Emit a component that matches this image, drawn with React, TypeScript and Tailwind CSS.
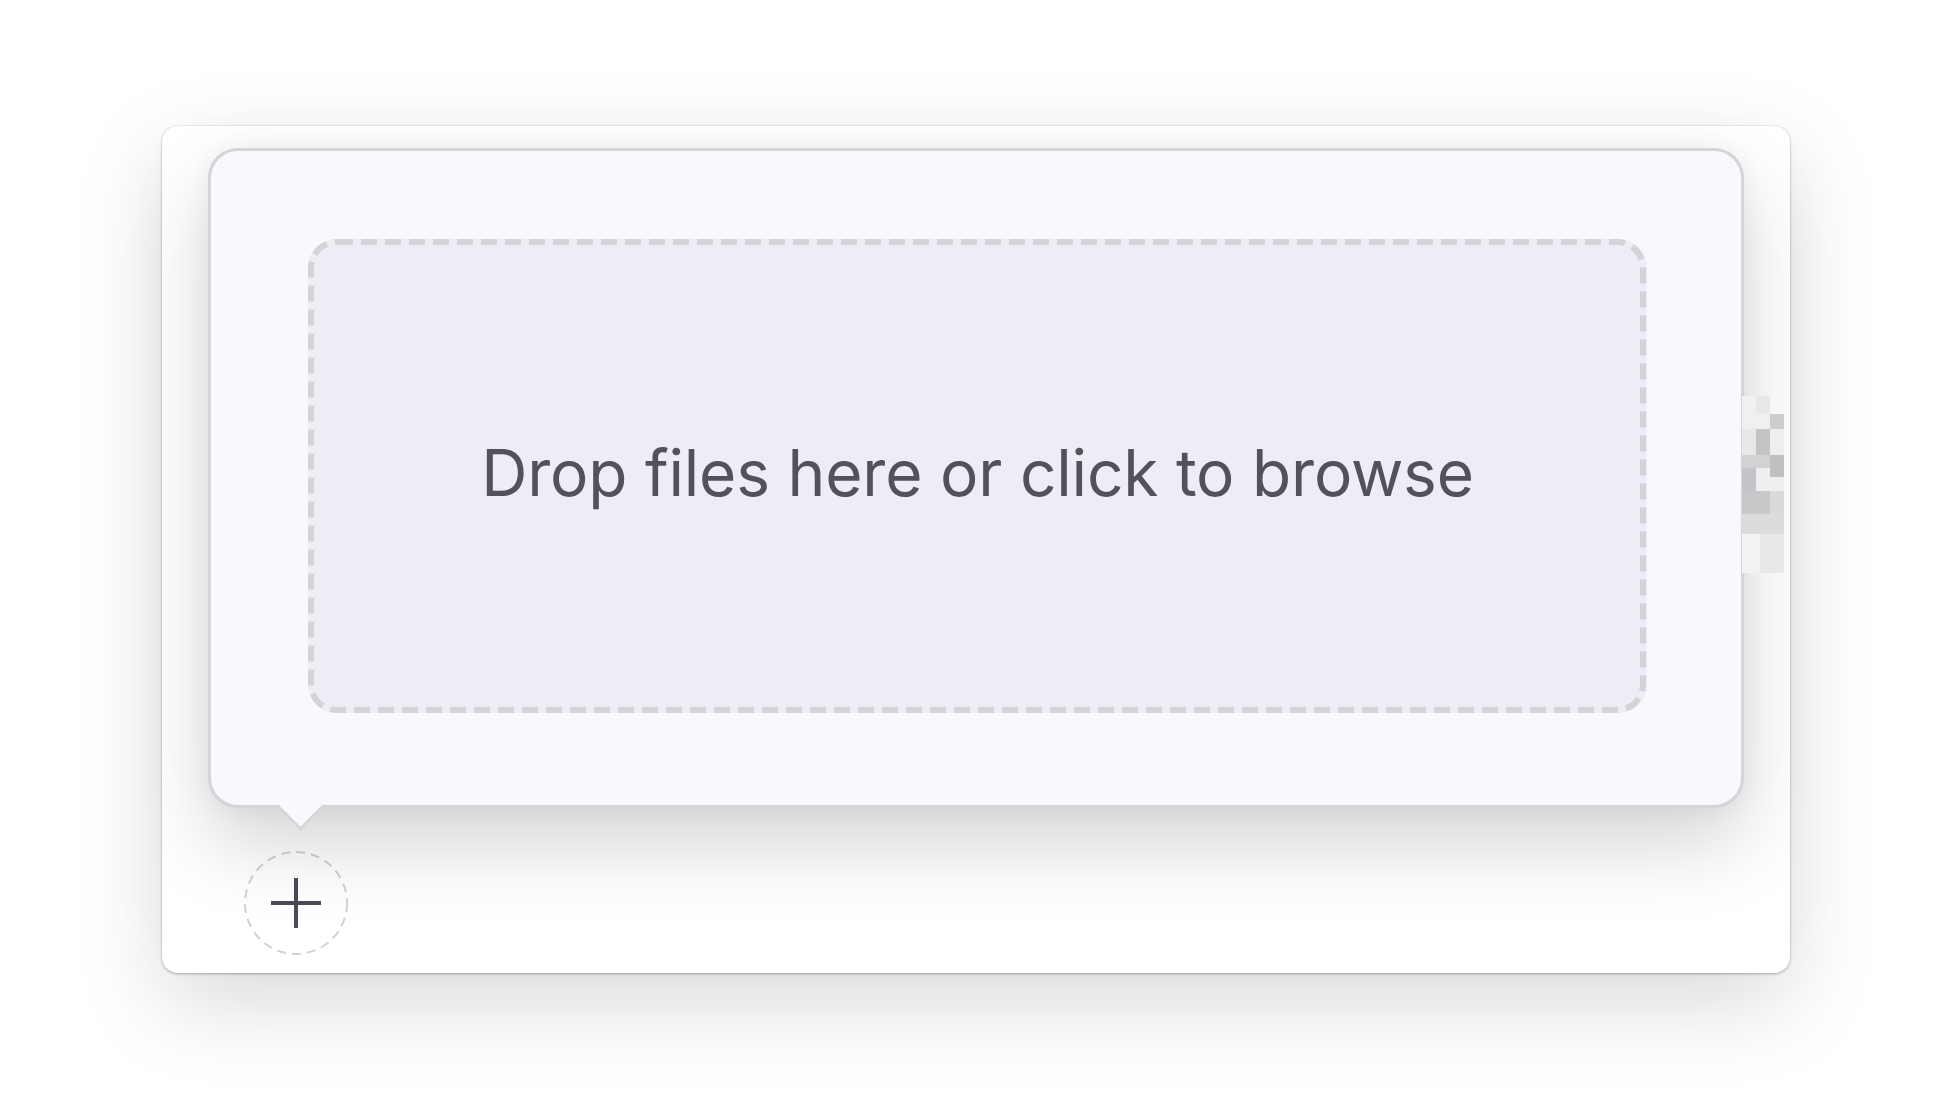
import * as React from "react"

// rows of the little pixelated strip at the right edge of the popover
const mosaic: { h: number; cells: { w: number; c: string }[] }[] = [
  { h: 18, cells: [{ w: 14, c: "bg-[#f0f0f0]" }, { w: 14, c: "bg-[#e8e8e8]" }, { w: 14, c: "bg-[#f7f7f7]" }] },
  { h: 15, cells: [{ w: 28, c: "bg-[#f0f0f0]" }, { w: 14, c: "bg-[#cdcdd0]" }] },
  { h: 26, cells: [{ w: 14, c: "bg-[#e8e8e8]" }, { w: 14, c: "bg-[#c4c4c6]" }, { w: 14, c: "bg-[#eeeeee]" }] },
  { h: 13, cells: [{ w: 28, c: "bg-[#d2d2d4]" }, { w: 14, c: "bg-[#c0c0c2]" }] },
  { h: 9, cells: [{ w: 14, c: "bg-[#c4c5c8]" }, { w: 14, c: "bg-[#efefef]" }, { w: 14, c: "bg-[#c0c0c2]" }] },
  { h: 14, cells: [{ w: 14, c: "bg-[#c4c5c8]" }, { w: 28, c: "bg-[#efefef]" }] },
  { h: 23, cells: [{ w: 28, c: "bg-[#c8c8ca]" }, { w: 14, c: "bg-[#dadada]" }] },
  { h: 20, cells: [{ w: 42, c: "bg-[#dcdcdc]" }] },
  { h: 39, cells: [{ w: 18, c: "bg-[#f2f2f2]" }, { w: 24, c: "bg-[#e8e8e8]" }] },
]

function Mosaic() {
  return (
    <div className="absolute left-[1580px] top-[270px] flex w-[42px] flex-col">
      {mosaic.map((row, i) => (
        <div key={i} className="flex" style={{ height: row.h }}>
          {row.cells.map((cell, j) => (
            <div key={j} className={cell.c} style={{ width: cell.w }} />
          ))}
        </div>
      ))}
    </div>
  )
}

function AddButton() {
  return (
    <button type="button" className="ml-[36px] h-[104px] w-[104px]">
      <svg width="104" height="104" viewBox="0 0 104 104" fill="none">
        <circle cx="52" cy="52" r="51" stroke="#d2d2d7" strokeWidth="2" strokeDasharray="9 6" />
        <path d="M52 27v50M27 52h50" stroke="#4b4b55" strokeWidth="4" />
      </svg>
    </button>
  )
}

export default function App() {
  return (
    <div
      className="flex min-h-screen items-center justify-center bg-white"
      style={{ fontFamily: "Inter, 'Noto Sans', sans-serif" }}
    >
      <div className="relative flex h-[847px] w-[1628px] flex-col rounded-[16px] bg-white px-[46px] pt-[22px] shadow-[0_0_0_1px_rgba(0,0,0,0.03),0_1px_3px_rgba(0,0,0,0.28),0_30px_90px_rgba(0,0,0,0.15)]">
        <div className="relative w-[1536px] rounded-[30px] border-[3px] border-[#d4d4d9] bg-[#f8f9fc] pb-[92px] pl-[97px] pr-[94px] pt-[88px] shadow-[0_0_24px_rgba(0,0,0,0.05),0_36px_80px_rgba(0,0,0,0.17)]">
          <div className="relative flex h-[474px] items-center justify-center rounded-[28px] bg-[#ededf6] pb-[6px]">
            <svg className="absolute inset-0" width="1338" height="474" fill="none">
              <rect x="3" y="3" width="1332" height="468" rx="26" stroke="#d3d3d8" strokeWidth="6" strokeDasharray="16 8" />
            </svg>
            <span className="relative text-[64px] leading-none tracking-[-0.2px] text-[#52525c]">
              Drop files here or click to browse
            </span>
          </div>
          <div className="absolute -bottom-[19px] left-[73px] h-[33px] w-[33px] rotate-45 border-b-[3px] border-r-[3px] border-[#d4d4d9] bg-[#f8f9fc]" />
        </div>
        <div className="mt-[43px]">
          <AddButton />
        </div>
        <Mosaic />
      </div>
    </div>
  )
}
